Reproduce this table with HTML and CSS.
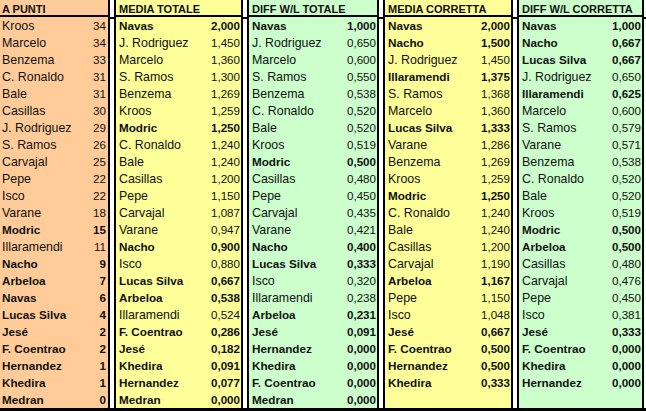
FILE: index.html
```html
<!DOCTYPE html>
<html>
<head>
<meta charset="utf-8">
<link rel="stylesheet" href="styles.css">
</head>
<body>
<div class="sheet">
  <div class="group g1 orange">
    <div class="head">A PUNTI</div>
    <div class="rows">
      <div class="row"><span class="n">Kroos</span><span class="v">34</span></div>
      <div class="row"><span class="n">Marcelo</span><span class="v">34</span></div>
      <div class="row"><span class="n">Benzema</span><span class="v">33</span></div>
      <div class="row"><span class="n">C. Ronaldo</span><span class="v">31</span></div>
      <div class="row"><span class="n">Bale</span><span class="v">31</span></div>
      <div class="row"><span class="n">Casillas</span><span class="v">30</span></div>
      <div class="row"><span class="n">J. Rodriguez</span><span class="v">29</span></div>
      <div class="row"><span class="n">S. Ramos</span><span class="v">26</span></div>
      <div class="row"><span class="n">Carvajal</span><span class="v">25</span></div>
      <div class="row"><span class="n">Pepe</span><span class="v">22</span></div>
      <div class="row"><span class="n">Isco</span><span class="v">22</span></div>
      <div class="row"><span class="n">Varane</span><span class="v">18</span></div>
      <div class="row b"><span class="n">Modric</span><span class="v">15</span></div>
      <div class="row"><span class="n">Illaramendi</span><span class="v">11</span></div>
      <div class="row b"><span class="n">Nacho</span><span class="v">9</span></div>
      <div class="row b"><span class="n">Arbeloa</span><span class="v">7</span></div>
      <div class="row b"><span class="n">Navas</span><span class="v">6</span></div>
      <div class="row b"><span class="n">Lucas Silva</span><span class="v">4</span></div>
      <div class="row b"><span class="n">Jesé</span><span class="v">2</span></div>
      <div class="row b"><span class="n">F. Coentrao</span><span class="v">2</span></div>
      <div class="row b"><span class="n">Hernandez</span><span class="v">1</span></div>
      <div class="row b"><span class="n">Khedira</span><span class="v">1</span></div>
      <div class="row b"><span class="n">Medran</span><span class="v">0</span></div>
    </div>
  </div>
  <div class="gap"></div>
  <div class="group g2 yellow">
    <div class="head">MEDIA TOTALE</div>
    <div class="rows">
      <div class="row b"><span class="n">Navas</span><span class="v">2,000</span></div>
      <div class="row"><span class="n">J. Rodriguez</span><span class="v">1,450</span></div>
      <div class="row"><span class="n">Marcelo</span><span class="v">1,360</span></div>
      <div class="row"><span class="n">S. Ramos</span><span class="v">1,300</span></div>
      <div class="row"><span class="n">Benzema</span><span class="v">1,269</span></div>
      <div class="row"><span class="n">Kroos</span><span class="v">1,259</span></div>
      <div class="row b"><span class="n">Modric</span><span class="v">1,250</span></div>
      <div class="row"><span class="n">C. Ronaldo</span><span class="v">1,240</span></div>
      <div class="row"><span class="n">Bale</span><span class="v">1,240</span></div>
      <div class="row"><span class="n">Casillas</span><span class="v">1,200</span></div>
      <div class="row"><span class="n">Pepe</span><span class="v">1,150</span></div>
      <div class="row"><span class="n">Carvajal</span><span class="v">1,087</span></div>
      <div class="row"><span class="n">Varane</span><span class="v">0,947</span></div>
      <div class="row b"><span class="n">Nacho</span><span class="v">0,900</span></div>
      <div class="row"><span class="n">Isco</span><span class="v">0,880</span></div>
      <div class="row b"><span class="n">Lucas Silva</span><span class="v">0,667</span></div>
      <div class="row b"><span class="n">Arbeloa</span><span class="v">0,538</span></div>
      <div class="row"><span class="n">Illaramendi</span><span class="v">0,524</span></div>
      <div class="row b"><span class="n">F. Coentrao</span><span class="v">0,286</span></div>
      <div class="row b"><span class="n">Jesé</span><span class="v">0,182</span></div>
      <div class="row b"><span class="n">Khedira</span><span class="v">0,091</span></div>
      <div class="row b"><span class="n">Hernandez</span><span class="v">0,077</span></div>
      <div class="row b"><span class="n">Medran</span><span class="v">0,000</span></div>
    </div>
  </div>
  <div class="gap"></div>
  <div class="group g3 green">
    <div class="head">DIFF W/L TOTALE</div>
    <div class="rows">
      <div class="row b"><span class="n">Navas</span><span class="v">1,000</span></div>
      <div class="row"><span class="n">J. Rodriguez</span><span class="v">0,650</span></div>
      <div class="row"><span class="n">Marcelo</span><span class="v">0,600</span></div>
      <div class="row"><span class="n">S. Ramos</span><span class="v">0,550</span></div>
      <div class="row"><span class="n">Benzema</span><span class="v">0,538</span></div>
      <div class="row"><span class="n">C. Ronaldo</span><span class="v">0,520</span></div>
      <div class="row"><span class="n">Bale</span><span class="v">0,520</span></div>
      <div class="row"><span class="n">Kroos</span><span class="v">0,519</span></div>
      <div class="row b"><span class="n">Modric</span><span class="v">0,500</span></div>
      <div class="row"><span class="n">Casillas</span><span class="v">0,480</span></div>
      <div class="row"><span class="n">Pepe</span><span class="v">0,450</span></div>
      <div class="row"><span class="n">Carvajal</span><span class="v">0,435</span></div>
      <div class="row"><span class="n">Varane</span><span class="v">0,421</span></div>
      <div class="row b"><span class="n">Nacho</span><span class="v">0,400</span></div>
      <div class="row b"><span class="n">Lucas Silva</span><span class="v">0,333</span></div>
      <div class="row"><span class="n">Isco</span><span class="v">0,320</span></div>
      <div class="row"><span class="n">Illaramendi</span><span class="v">0,238</span></div>
      <div class="row b"><span class="n">Arbeloa</span><span class="v">0,231</span></div>
      <div class="row b"><span class="n">Jesé</span><span class="v">0,091</span></div>
      <div class="row b"><span class="n">Hernandez</span><span class="v">0,000</span></div>
      <div class="row b"><span class="n">Khedira</span><span class="v">0,000</span></div>
      <div class="row b"><span class="n">F. Coentrao</span><span class="v">0,000</span></div>
      <div class="row b"><span class="n">Medran</span><span class="v">0,000</span></div>
    </div>
  </div>
  <div class="gap"></div>
  <div class="group g4 yellow">
    <div class="head">MEDIA CORRETTA</div>
    <div class="rows">
      <div class="row b"><span class="n">Navas</span><span class="v">2,000</span></div>
      <div class="row b"><span class="n">Nacho</span><span class="v">1,500</span></div>
      <div class="row"><span class="n">J. Rodriguez</span><span class="v">1,450</span></div>
      <div class="row b"><span class="n">Illaramendi</span><span class="v">1,375</span></div>
      <div class="row"><span class="n">S. Ramos</span><span class="v">1,368</span></div>
      <div class="row"><span class="n">Marcelo</span><span class="v">1,360</span></div>
      <div class="row b"><span class="n">Lucas Silva</span><span class="v">1,333</span></div>
      <div class="row"><span class="n">Varane</span><span class="v">1,286</span></div>
      <div class="row"><span class="n">Benzema</span><span class="v">1,269</span></div>
      <div class="row"><span class="n">Kroos</span><span class="v">1,259</span></div>
      <div class="row b"><span class="n">Modric</span><span class="v">1,250</span></div>
      <div class="row"><span class="n">C. Ronaldo</span><span class="v">1,240</span></div>
      <div class="row"><span class="n">Bale</span><span class="v">1,240</span></div>
      <div class="row"><span class="n">Casillas</span><span class="v">1,200</span></div>
      <div class="row"><span class="n">Carvajal</span><span class="v">1,190</span></div>
      <div class="row b"><span class="n">Arbeloa</span><span class="v">1,167</span></div>
      <div class="row"><span class="n">Pepe</span><span class="v">1,150</span></div>
      <div class="row"><span class="n">Isco</span><span class="v">1,048</span></div>
      <div class="row b"><span class="n">Jesé</span><span class="v">0,667</span></div>
      <div class="row b"><span class="n">F. Coentrao</span><span class="v">0,500</span></div>
      <div class="row b"><span class="n">Hernandez</span><span class="v">0,500</span></div>
      <div class="row b"><span class="n">Khedira</span><span class="v">0,333</span></div>
      <div class="row"></div>
    </div>
  </div>
  <div class="gap"></div>
  <div class="group g5 green">
    <div class="head">DIFF W/L CORRETTA</div>
    <div class="rows">
      <div class="row b"><span class="n">Navas</span><span class="v">1,000</span></div>
      <div class="row b"><span class="n">Nacho</span><span class="v">0,667</span></div>
      <div class="row b"><span class="n">Lucas Silva</span><span class="v">0,667</span></div>
      <div class="row"><span class="n">J. Rodriguez</span><span class="v">0,650</span></div>
      <div class="row b"><span class="n">Illaramendi</span><span class="v">0,625</span></div>
      <div class="row"><span class="n">Marcelo</span><span class="v">0,600</span></div>
      <div class="row"><span class="n">S. Ramos</span><span class="v">0,579</span></div>
      <div class="row"><span class="n">Varane</span><span class="v">0,571</span></div>
      <div class="row"><span class="n">Benzema</span><span class="v">0,538</span></div>
      <div class="row"><span class="n">C. Ronaldo</span><span class="v">0,520</span></div>
      <div class="row"><span class="n">Bale</span><span class="v">0,520</span></div>
      <div class="row"><span class="n">Kroos</span><span class="v">0,519</span></div>
      <div class="row b"><span class="n">Modric</span><span class="v">0,500</span></div>
      <div class="row b"><span class="n">Arbeloa</span><span class="v">0,500</span></div>
      <div class="row"><span class="n">Casillas</span><span class="v">0,480</span></div>
      <div class="row"><span class="n">Carvajal</span><span class="v">0,476</span></div>
      <div class="row"><span class="n">Pepe</span><span class="v">0,450</span></div>
      <div class="row"><span class="n">Isco</span><span class="v">0,381</span></div>
      <div class="row b"><span class="n">Jesé</span><span class="v">0,333</span></div>
      <div class="row b"><span class="n">F. Coentrao</span><span class="v">0,000</span></div>
      <div class="row b"><span class="n">Khedira</span><span class="v">0,000</span></div>
      <div class="row b"><span class="n">Hernandez</span><span class="v">0,000</span></div>
      <div class="row"></div>
    </div>
  </div>
  <div class="tail"></div>
</div>
</body>
</html>
```

FILE: styles.css
```css
html, body {
  margin: 0;
  padding: 0;
  background: #ffffff;
}

.sheet {
  display: flex;
  width: 646px;
  height: 408px;
  border-bottom: 3px solid #000;
  font-family: "Liberation Sans", Arial, sans-serif;
  color: #111;
}

.group {
  display: flex;
  flex-direction: column;
  border-left: 2px solid #000;
  border-right: 2px solid #000;
}

.g1 { width: 108px; border-left: none; }
.g2 { width: 125px; }
.g3 { width: 128px; }
.g4 { width: 126px; }
.g5 { width: 123px; }

.orange { background: #ffcc99; }
.yellow { background: #ffff99; }
.green { background: #ccffcc; }

.gap, .tail {
  width: 4px;
  background: #fff;
}
.tail { width: 2px; }

.gap::before, .tail::before {
  content: "";
  display: block;
  height: 17px;
  border-bottom: 2px solid #000;
}

.head {
  height: 17px;
  box-sizing: border-box;
  padding: 3px 0 0 3px;
  border-bottom: 2px solid #000;
  font-weight: bold;
  font-size: 11px;
  line-height: 13px;
  white-space: nowrap;
  overflow: hidden;
}
.g1 .head { padding-left: 2px; }

.rows {
  flex: 1;
  display: grid;
  grid-template-rows: repeat(23, 1fr);
}

.row {
  display: flex;
  justify-content: space-between;
  align-items: center;
  padding: 0 1px 0 3px;
  white-space: nowrap;
}
.g1 .row { padding: 0 2px 0 2px; }

.n {
  font-size: 12.4px;
}
.v {
  font-size: 11.6px;
}
.b .n {
  font-weight: bold;
  font-size: 11.7px;
}
.b .v {
  font-weight: bold;
}
```
